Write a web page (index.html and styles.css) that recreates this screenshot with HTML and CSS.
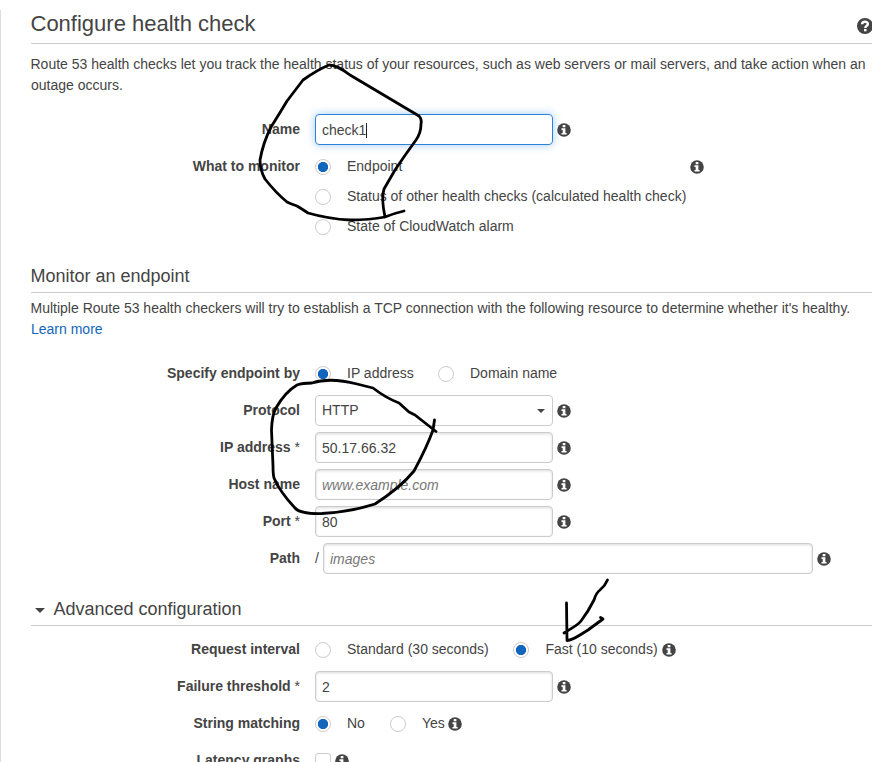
FILE: index.html
```html
<!DOCTYPE html>
<html lang="en">
<head>
<meta charset="utf-8">
<title>Configure health check</title>
<link rel="stylesheet" href="styles.css">
</head>
<body>
<svg width="0" height="0" class="defs">
  <symbol id="info" viewBox="0 0 14 14">
    <circle cx="7" cy="7" r="6.8" fill="#444"/>
    <path d="M5.700 2.100h2.700v2.100H5.700zM4.500 5.200h3.900v4.700h1.200v1.700H4.500V9.900h1.200V6.900H4.500z" fill="#fff"/>
  </symbol>
</svg>
<main class="page">
  <header class="title">
    <h1>Configure health check</h1>
    <svg class="help" viewBox="0 0 16 16"><circle cx="8" cy="8" r="8" fill="#444"/><path d="M5.100 6.300C5.100 2.900 10.900 3 10.900 6C10.900 7.800 8.300 7.700 8.300 9.900" fill="none" stroke="#fff" stroke-width="2.400"/><path d="M7 11h2.500v2.300H7z" fill="#fff"/></svg>
  </header>
  <p class="intro">Route 53 health checks let you track the health status of your resources, such as web servers or mail servers, and take action when an outage occurs.</p>

  <section class="rows basic">
    <div class="row"><label class="name">Name</label><div class="field focus">check1<i class="caret"></i></div><svg class="info"><use href="#info"/></svg></div>
    <div class="row monitor"><label class="name">What to monitor</label>
      <div class="stack">
        <div class="choice"><i class="radio on"></i><span>Endpoint</span></div>
        <div class="choice"><i class="radio"></i><span>Status of other health checks (calculated health check)</span></div>
        <div class="choice"><i class="radio"></i><span>State of CloudWatch alarm</span></div>
      </div><svg class="info"><use href="#info"/></svg></div>
  </section>

  <h2>Monitor an endpoint</h2>
  <p class="desc">Multiple Route 53 health checkers will try to establish a TCP connection with the following resource to determine whether it's healthy. <a>Learn more</a></p>

  <section class="rows endpoint">
    <div class="row"><label class="name">Specify endpoint by</label><div class="choice first-ip"><i class="radio on"></i><span>IP address</span></div><div class="choice"><i class="radio"></i><span>Domain name</span></div></div>
    <div class="row"><label class="name">Protocol</label><div class="field select">HTTP<i class="arrow"></i></div><svg class="info"><use href="#info"/></svg></div>
    <div class="row"><label class="name">IP address <b>*</b></label><div class="field">50.17.66.32</div><svg class="info"><use href="#info"/></svg></div>
    <div class="row"><label class="name">Host name</label><div class="field hint">www.example.com</div><svg class="info"><use href="#info"/></svg></div>
    <div class="row"><label class="name">Port <b>*</b></label><div class="field">80</div><svg class="info"><use href="#info"/></svg></div>
    <div class="row"><label class="name">Path</label><span class="slash">/</span><div class="field hint wide">images</div><svg class="info"><use href="#info"/></svg></div>
  </section>

  <h2 class="advanced"><i class="arrow"></i>Advanced configuration</h2>
  <section class="rows options">
    <div class="row"><label class="name">Request interval</label><div class="choice first-standard"><i class="radio"></i><span>Standard (30 seconds)</span></div><div class="choice fast"><i class="radio on"></i><span>Fast (10 seconds)</span></div><svg class="info"><use href="#info"/></svg></div>
    <div class="row"><label class="name">Failure threshold <b>*</b></label><div class="field">2</div><svg class="info"><use href="#info"/></svg></div>
    <div class="row"><label class="name">String matching</label><div class="choice first-no"><i class="radio on"></i><span>No</span></div><div class="choice yes"><i class="radio"></i><span>Yes</span></div><svg class="info"><use href="#info"/></svg></div>
    <div class="row"><label class="name">Latency graphs</label><i class="check"></i><svg class="info"><use href="#info"/></svg></div>
  </section>
</main>
<svg class="ink" viewBox="0 0 872 762">
  <path d="M404 211Q395 213 385 217Q370 220 350 220Q329 219 308 213Q302 209 297 206Q291 204 287 202Q276 193 265 179Q260 170 260 160Q263 143 271 127Q278 116 287 101L303 80Q317 70 329 65Q337 65 350 75L419 116Q422 119 421 124Q421 133 416 140Q405 155 395 170L384 189Q381 198 385 217"/>
  <path d="M434.500 420L433 430Q427 447 414 471Q400 488 375 504Q350 512 322 513.500Q300 514 295 508Q280 492 274 478Q273 474 273 466L271.500 430Q272 415 276 408Q285 392 297 385Q302 383 312 383Q330 377 357 384L373 388Q386 398 399 403L409 412L415 415L436 431.500"/>
  <path d="M607.500 580Q605 586 600 590Q596 593 594 600Q588 612 581 621C577 626 570 629 564 633M566.500 603L567 640.500Q572 640 580 635L588 630L603 619L600.500 617.500"/>
</svg>
</body>
</html>
```
FILE: styles.css
```css
* { box-sizing: border-box; }
body { margin: 0; background: #fff; color: #444; font: 14px/21px "Liberation Sans", Arial, sans-serif; width: 872px; height: 762px; overflow: hidden; position: relative; }
.defs { position: absolute; }
.page { margin-top: 10px; border-left: 1px solid #ddd; padding-left: 30px; height: 752px; overflow: hidden; }
.title { display: flex; justify-content: space-between; height: 34px; border-bottom: 1px solid #ccc; }
h1 { margin: 0; font-size: 22px; font-weight: 400; line-height: 27px; text-indent: -.5px; }
.help { width: 16px; height: 16px; margin: 8px -1px 0 0; flex: none; }
p { margin: 0; text-indent: -.5px; }
.intro { padding-top: 10px; height: 67px; }
h2 { margin: 0; height: 31px; font-size: 18px; font-weight: 400; line-height: 28px; border-bottom: 1px solid #ccc; text-indent: -.5px; }
.desc { padding-top: 5px; height: 62px; }
a { color: #1166bb; }
.row { display: flex; height: 37px; padding-top: 3px; }
.basic { height: 151px; }
.endpoint { height: 240px; }
.options { padding-top: 5px; }
.monitor { height: 97px; }
.name { width: 269px; margin-right: 15px; text-align: right; font-weight: 700; line-height: 30px; flex: none; }
.name b { font-weight: 400; }
.field { position: relative; width: 238px; height: 31px; border: 1px solid #ccc; border-radius: 4px; padding-left: 6px; line-height: 30px; box-shadow: inset 0 1px 3px rgba(0,0,0,.15); flex: none; }
.field.focus { border-color: #2b83d8; box-shadow: 0 0 8px rgba(50,140,230,.45); }
.field.select { box-shadow: none; line-height: 28px; }
.wide { width: 490px; }
.hint { color: #777; font-style: italic; }
.slash { width: 8px; line-height: 30px; }
.caret { display: inline-block; width: 1px; height: 15px; background: #222; vertical-align: -3px; }
.arrow { display: inline-block; border: 4px solid transparent; border-top-color: #444; border-bottom: 0; }
.select .arrow { position: absolute; right: 7px; top: 13px; }
.advanced .arrow { border-width: 5px 5px 0; margin: 0 9px 2px 4px; vertical-align: middle; position: relative; top: 1px; }
.info { width: 14px; height: 14px; margin: 9px 0 0 4px; flex: none; }
.stack { width: 371px; }
.choice { display: flex; line-height: 30px; height: 30px; white-space: nowrap; }
.radio { width: 16px; height: 16px; border: 1px solid #ccc; border-radius: 50%; margin: 8px 16px 0 0; flex: none; }
.radio.on { background: radial-gradient(circle, #1166bb 0 4.800px, #fff 5.400px); }
.first-ip { width: 123px; }
.first-standard { width: 198px; }
.first-no { width: 75px; }
.fast .radio { margin-right: 16.500px; }
.yes { width: 54px; }
.check { width: 16px; height: 16px; border: 1px solid #ccc; border-radius: 3px; margin-top: 8px; }
.ink { position: absolute; left: 0; top: 0; width: 872px; height: 762px; fill: none; stroke: #000; stroke-width: 2.800; stroke-linecap: round; stroke-linejoin: round; }
```
